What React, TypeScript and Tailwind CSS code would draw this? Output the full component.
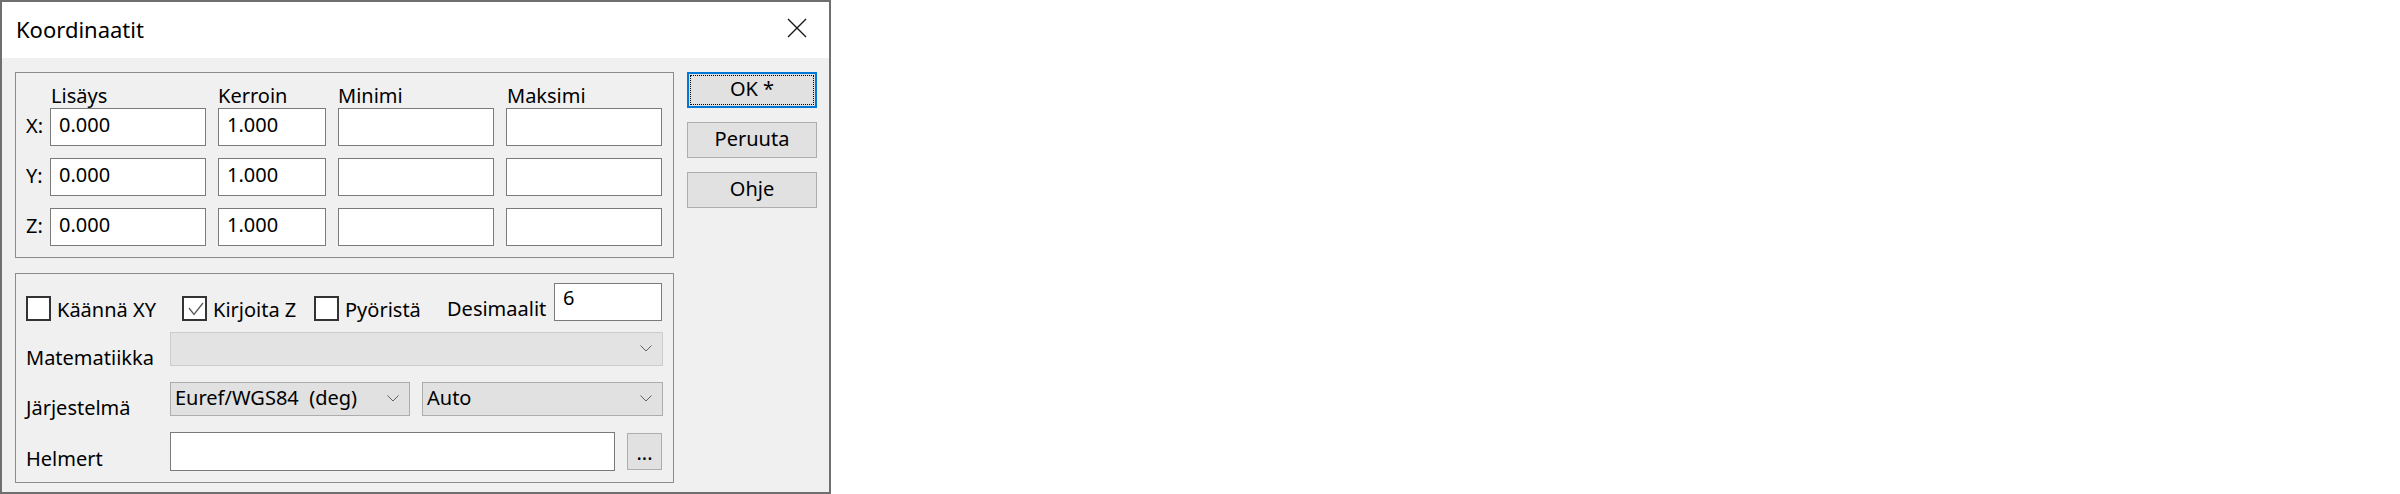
import { ReactNode } from 'react'

// text box with a thin grey frame, the way the coordinate fields look
function Field({ value = '', className = '' }: { value?: string; className?: string }) {
  return (
    <div className={`h-[38px] bg-white border border-[#7a7a7a] pl-[8px] flex items-center pb-[4px] ${className}`}>
      {value}
    </div>
  )
}

function Chevron() {
  return (
    <svg width="12" height="7" viewBox="0 0 12 7" className="shrink-0">
      <polyline points="0.5,0.5 6,6 11.5,0.5" fill="none" stroke="#606060" strokeWidth="1" />
    </svg>
  )
}

function Combo({ value = '', disabled = false, className = '' }: { value?: string; disabled?: boolean; className?: string }) {
  return (
    <div
      className={`h-[34px] flex items-center justify-between pl-[4px] pr-[10px] pb-[2px] border ${
        disabled ? 'bg-[#e3e3e3] border-[#cccccc]' : 'bg-[#e1e1e1] border-[#adadad]'
      } ${className}`}
    >
      <span className="whitespace-pre">{value}</span>
      <Chevron />
    </div>
  )
}

function Check({ label, checked = false, width }: { label: string; checked?: boolean; width: string }) {
  return (
    <div className={`flex items-end gap-[6px] ${width}`}>
      <div className="w-[25px] h-[25px] border-2 border-[#333333] bg-white shrink-0">
        {checked && (
          <svg width="21" height="21" viewBox="0 0 21 21">
            <polyline points="5,10 10,16.5 19,5" fill="none" stroke="#5a5a5a" strokeWidth="1.3" />
          </svg>
        )}
      </div>
      <span className="leading-[20px] mb-[1px]">{label}</span>
    </div>
  )
}

function Row({ label, mb, children }: { label: string; mb: string; children: ReactNode }) {
  return (
    <div className="flex items-end">
      <span className={`w-[144px] shrink-0 leading-[20px] ${mb}`}>{label}</span>
      <div className="flex-1 flex items-center gap-[12px]">{children}</div>
    </div>
  )
}

function Button({ children, focused = false }: { children: ReactNode; focused?: boolean }) {
  if (focused) {
    return (
      <div className="h-[36px] border-2 border-[#0078d7] bg-[#e1e1e1] p-[1px]">
        <div className="h-full border border-dotted border-black flex items-center justify-center pb-[2px]">
          {children}
        </div>
      </div>
    )
  }
  return (
    <div className="h-[36px] border border-[#adadad] bg-[#e1e1e1] flex items-center justify-center pb-[2px]">
      {children}
    </div>
  )
}

const coords = ['X:', 'Y:', 'Z:']

export default function App() {
  return (
    <div className="w-[2400px] h-[494px] bg-white font-['Noto_Sans','Open_Sans',sans-serif] text-[20px] text-black">
      <div className="w-[831px] h-[494px] border-2 border-[#6f6f6f] flex flex-col">
        {/* title bar */}
        <div className="h-[56px] bg-white flex items-center justify-between pl-[14px] pr-[22px] shrink-0">
          <span className="text-[22px] pb-[1px]">Koordinaatit</span>
          <svg width="20" height="20" viewBox="0 0 20 20" className="mb-[4px]">
            <path d="M1 1 L19 19 M19 1 L1 19" stroke="#1a1a1a" strokeWidth="1.4" />
          </svg>
        </div>

        <div className="flex-1 bg-[#f0f0f0] flex pl-[13px] pt-[14px] gap-[13px]">
          <div className="w-[659px] flex flex-col gap-[15px]">
            {/* offsets and scale factors */}
            <div className="h-[186px] border border-[#8c8c8c] pl-[10px]">
              <div className="flex items-end h-[35px] pl-[24px] gap-[12px] pb-[2px] leading-[20px]">
                <span className="w-[156px] pl-[1px]">Lisäys</span>
                <span className="w-[108px]">Kerroin</span>
                <span className="w-[156px]">Minimi</span>
                <span className="w-[156px] pl-[1px]">Maksimi</span>
              </div>
              <div className="flex flex-col gap-[12px]">
                {coords.map(c => (
                  <div key={c} className="flex items-center h-[38px]">
                    <span className="w-[24px] pb-[2px]">{c}</span>
                    <div className="flex gap-[12px]">
                      <Field value="0.000" className="w-[156px]" />
                      <Field value="1.000" className="w-[108px]" />
                      <Field className="w-[156px]" />
                      <Field className="w-[156px]" />
                    </div>
                  </div>
                ))}
              </div>
            </div>

            {/* output options */}
            <div className="h-[210px] border border-[#8c8c8c] pl-[10px] pr-[10px] pt-[9px] flex flex-col">
              <div className="flex items-end h-[38px]">
                <Check label="Käännä XY" width="w-[156px]" />
                <Check label="Kirjoita Z" checked width="w-[132px]" />
                <Check label="Pyöristä" width="w-[133px]" />
                <span className="w-[107px] leading-[20px] mb-[2px]">Desimaalit</span>
                <div className="w-[108px] h-[38px] bg-white border border-[#7a7a7a] pl-[8px] pt-[4px] leading-[20px]">6</div>
              </div>
              <div className="mt-[11px]">
                <Row label="Matematiikka" mb="-mb-[2px]">
                  <Combo disabled className="flex-1" />
                </Row>
              </div>
              <div className="mt-[16px]">
                <Row label="Järjestelmä" mb="-mb-[2px]">
                  <Combo value="Euref/WGS84  (deg)" className="w-[240px]" />
                  <Combo value="Auto" className="flex-1" />
                </Row>
              </div>
              <div className="mt-[16px]">
                <Row label="Helmert" mb="mb-[2px]">
                  <div className="w-[445px] h-[39px] bg-white border border-[#7a7a7a]" />
                  <div className="w-[35px] h-[37px] border border-[#adadad] bg-[#e1e1e1] flex items-end justify-center pb-[6px] leading-[20px]">
                    ...
                  </div>
                </Row>
              </div>
            </div>
          </div>

          <div className="w-[130px] flex flex-col gap-[14px]">
            <Button focused>OK *</Button>
            <Button>Peruuta</Button>
            <Button>Ohje</Button>
          </div>
        </div>
      </div>
    </div>
  )
}
